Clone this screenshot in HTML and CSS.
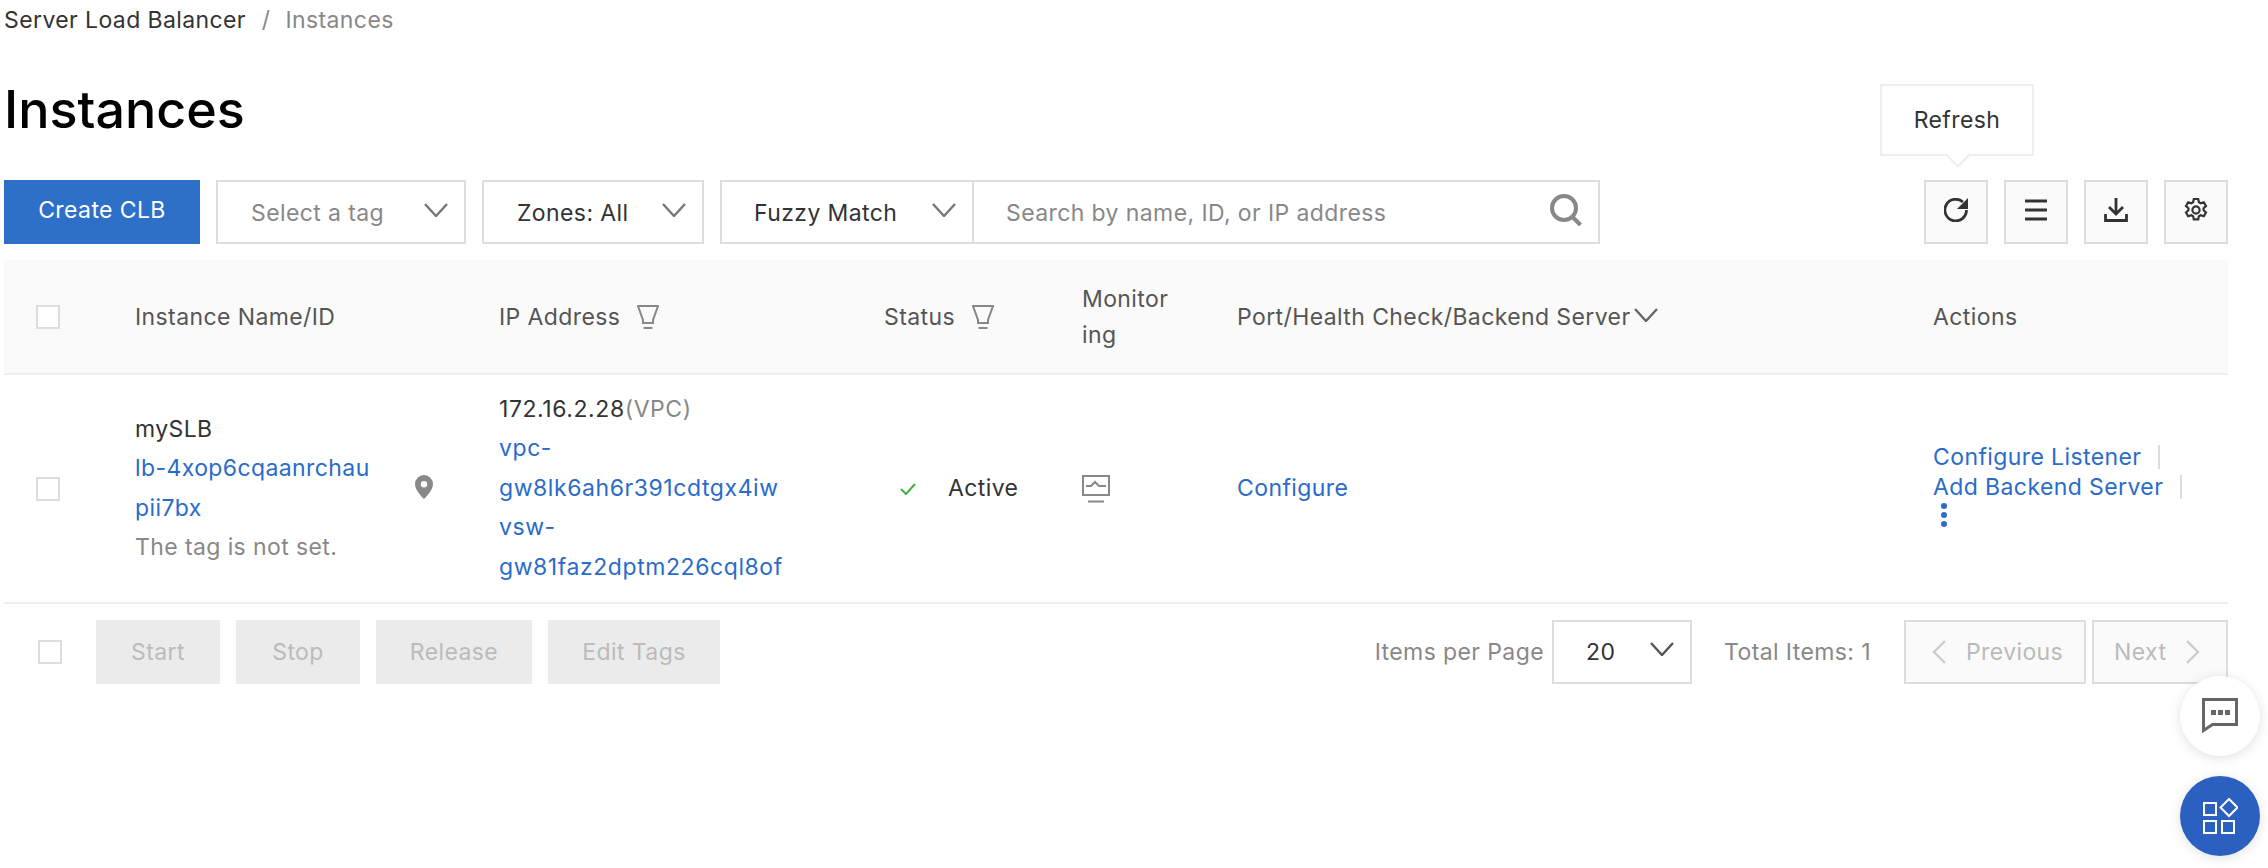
FILE: index.html
```html
<!DOCTYPE html>
<html lang="en">
<head>
    <meta charset="UTF-8">
    <title>Instances</title>
    <link rel="stylesheet" href="styles.css">
</head>
<body>
    <div class="page">
        <div class="crumbs">
            <span>Server Load Balancer</span>
            <span class="crumb-sep">/</span>
            <span class="crumb-now">Instances</span>
        </div>
        <h1 class="title">Instances</h1>

        <div class="toolbar">
            <button class="btn-primary">Create CLB</button>
            <div class="select select-tag">
                <span class="placeholder">Select a tag</span>
                <svg class="chev" viewBox="0 0 24 14"><path d="M1 1l11 12L23 1"/></svg>
            </div>
            <div class="select select-zone">
                <span>Zones: All</span>
                <svg class="chev" viewBox="0 0 24 14"><path d="M1 1l11 12L23 1"/></svg>
            </div>
            <div class="search-group">
                <div class="select select-match">
                    <span>Fuzzy Match</span>
                    <svg class="chev" viewBox="0 0 24 14"><path d="M1 1l11 12L23 1"/></svg>
                </div>
                <div class="search">
                    <span class="placeholder">Search by name, ID, or IP address</span>
                    <svg class="search-icon" viewBox="0 0 32 32"><circle cx="14" cy="14" r="12"/><path d="M22.500 23l8 8"/></svg>
                </div>
            </div>
            <div class="tools">
                <div class="tool tool-refresh">
                    <div class="tooltip">Refresh</div>
                    <svg class="tool-icon" viewBox="0 0 24 24"><path d="M22.500 12a10.800 10.800 0 1 1-3.600-8" fill="none"/><path class="solid" d="M24 0v11H13z"/></svg>
                </div>
                <div class="tool">
                    <svg class="tool-icon" viewBox="0 0 24 24"><path d="M1 3h22M1 12h22M1 21h22"/></svg>
                </div>
                <div class="tool">
                    <svg class="tool-icon" viewBox="0 0 24 24"><path d="M12 0v15M5 9l7 7 7-7M1.500 16v6.500h21V16"/></svg>
                </div>
                <div class="tool">
                    <svg class="tool-icon gear" viewBox="0 0 24 24"><path d="M9.800 1h4.400l.7 3.200 1.800 1 3.100-1 2.200 3.800-2.400 2.200v2l2.400 2.200-2.200 3.800-3.100-1-1.800 1-.7 3.200H9.800l-.7-3.200-1.800-1-3.100 1-2.200-3.800 2.400-2.200v-2L2 8l2.200-3.800 3.100 1 1.800-1z"/><circle cx="12" cy="12" r="3.600"/></svg>
                </div>
            </div>
        </div>

        <table class="list">
            <colgroup>
                <col class="col-check">
                <col class="col-name">
                <col class="col-ip">
                <col class="col-status">
                <col class="col-mon">
                <col class="col-port">
                <col class="col-actions">
            </colgroup>
            <thead>
                <tr>
                    <th><span class="check"></span></th>
                    <th>Instance Name/ID</th>
                    <th>IP Address <svg class="filter" viewBox="0 0 22 24"><path d="M1 1h20l-5 14v3H6v-3z"/><path d="M6.500 23h9"/></svg></th>
                    <th>Status <svg class="filter" viewBox="0 0 22 24"><path d="M1 1h20l-5 14v3H6v-3z"/><path d="M6.500 23h9"/></svg></th>
                    <th class="th-mon">Monitoring</th>
                    <th>Port/Health Check/Backend Server<svg class="sort" viewBox="0 0 24 14"><path d="M1 1l11 12L23 1"/></svg></th>
                    <th>Actions</th>
                </tr>
            </thead>
            <tbody>
                <tr>
                    <td><span class="check"></span></td>
                    <td>
                        <div class="name-cell">
                            <div class="name-text">
                                <div>mySLB</div>
                                <a href="#" class="break">lb-4xop6cqaanrchaupii7bx</a>
                                <div class="muted">The tag is not set.</div>
                            </div>
                            <svg class="pin" viewBox="0 0 18 24"><path fill-rule="evenodd" d="M9 0a9 9 0 0 1 9 9c0 5-5 11-9 15C5 20 0 14 0 9a9 9 0 0 1 9-9zm0 6a3.200 3.200 0 1 0 0 6.400A3.200 3.200 0 0 0 9 6z"/></svg>
                        </div>
                    </td>
                    <td class="ip-cell">
                        <div>172.16.2.28<span class="muted">(VPC)</span></div>
                        <a href="#">vpc-gw8lk6ah6r391cdtgx4iw</a><br>
                        <a href="#">vsw-gw81faz2dptm226cql8of</a>
                    </td>
                    <td>
                        <div class="status">
                            <svg class="ok" viewBox="0 0 16 12"><path d="M1 6l5 5 9-10"/></svg>
                            Active
                        </div>
                    </td>
                    <td>
                        <svg class="monitor" viewBox="0 0 28 28"><path d="M1 1h26v19H1z"/><path d="M4 11h5l4-4 4 4h7M6 26.500h16"/></svg>
                    </td>
                    <td><a href="#">Configure</a></td>
                    <td class="actions">
                        <div class="action-line"><a href="#">Configure Listener</a><span class="bar"></span></div>
                        <div class="action-line"><a href="#">Add Backend Server</a><span class="bar"></span></div>
                        <div class="dots"><i></i><i></i><i></i></div>
                    </td>
                </tr>
            </tbody>
        </table>

        <div class="footer">
            <span class="check foot-check"></span>
            <div class="bulk">
                <button class="btn-off btn-short">Start</button>
                <button class="btn-off btn-short">Stop</button>
                <button class="btn-off btn-release">Release</button>
                <button class="btn-off btn-tags">Edit Tags</button>
            </div>
            <div class="pager">
                <span class="muted">Items per Page</span>
                <div class="select select-size">
                    <span>20</span>
                    <svg class="chev chev-dark" viewBox="0 0 24 14"><path d="M1 1l11 12L23 1"/></svg>
                </div>
                <span class="muted total">Total Items: 1</span>
                <button class="page-btn page-prev">
                    <svg class="page-arrow" viewBox="0 0 14 24"><path d="M13 1L2 12l11 11"/></svg>
                    Previous
                </button>
                <button class="page-btn page-next">
                    Next
                    <svg class="page-arrow" viewBox="0 0 14 24"><path d="M1 1l11 11L1 23"/></svg>
                </button>
            </div>
        </div>
    </div>

    <div class="float float-chat">
        <svg viewBox="0 0 36 36"><path class="chat-line" d="M1.500 1.500h33v25h-24l-9 6z"/><path class="chat-dots" d="M9 12h5v5H9zM16 12h5v5h-5zM23 12h5v5h-5z"/></svg>
    </div>
    <div class="float float-apps">
        <svg viewBox="0 0 36 36"><path d="M2 5h12v12H2zM2 23h12v12H2zM20 23h12v12H20zM27 1l8.500 8.500L27 18l-8.500-8.500z"/></svg>
    </div>
</body>
</html>
```

FILE: styles.css
```css
* {
    box-sizing: border-box;
}
html, body {
    margin: 0;
    padding: 0;
    background: #fff;
}
body {
    font-family: Inter, "Noto Sans", sans-serif;
    font-size: 23px;
    letter-spacing: 0.4px;
    color: #333;
    height: 868px;
    overflow: hidden;
    position: relative;
}
a {
    color: #2b6bc9;
    text-decoration: none;
}
button {
    font: inherit;
    letter-spacing: inherit;
}
.muted {
    color: #888;
}
.page {
    width: 2228px;
    padding-left: 4px;
}

/* header */
.crumbs {
    height: 40px;
    line-height: 40px;
    color: #333;
}
.crumb-sep {
    color: #888;
    margin: 0 8px 0 9px;
}
.crumb-now {
    color: #888;
}
.title {
    margin: 35px 0 0;
    height: 105px;
    font-size: 52px;
    line-height: 70px;
    font-weight: 500;
    letter-spacing: 0;
    color: #000;
}

/* toolbar */
.toolbar {
    display: flex;
    height: 64px;
}
.btn-primary {
    width: 196px;
    height: 64px;
    border: 0;
    background: #2e6fc8;
    color: #fff;
    padding: 0 0 4px;
}
.select {
    display: flex;
    align-items: center;
    justify-content: space-between;
    height: 64px;
    border: 2px solid #ddd;
    background: #fff;
    padding: 2px 16px 0 33px;
}
.select-tag {
    width: 250px;
    margin-left: 16px;
}
.select-zone {
    width: 222px;
    margin-left: 16px;
}
.select-match {
    width: 252px;
    border-right: 0;
    padding-left: 32px;
}
.chev {
    width: 24px;
    height: 14px;
    margin-bottom: 6px;
    fill: none;
    stroke: #777;
    stroke-width: 2.400;
}
.placeholder {
    color: #888;
}
.search-group {
    display: flex;
    margin-left: 16px;
}
.search {
    width: 628px;
    height: 64px;
    border: 2px solid #ddd;
    display: flex;
    align-items: center;
    justify-content: space-between;
    padding: 2px 16px 0 32px;
}
.search-icon {
    width: 32px;
    height: 32px;
    margin-bottom: 6px;
    fill: none;
    stroke: #888;
    stroke-width: 4;
}
.tools {
    margin-left: auto;
    display: flex;
    gap: 16px;
}
.tool {
    width: 64px;
    height: 64px;
    border: 2px solid #ddd;
    background: #fafafa;
    display: flex;
    align-items: center;
    justify-content: center;
    padding-bottom: 4px;
}
.tool-refresh {
    position: relative;
}
.tool-icon {
    width: 24px;
    height: 24px;
    fill: none;
    stroke: #333;
    stroke-width: 2.800;
}
.tool-icon .solid {
    fill: #333;
    stroke: none;
}
.tool-icon.gear {
    stroke-width: 2.200;
}
.tooltip {
    position: absolute;
    left: -46px;
    bottom: 86px;
    width: 154px;
    height: 72px;
    border: 2px solid #eee;
    background: #fff;
    text-align: center;
    line-height: 68px;
}
.tooltip::after {
    content: "";
    position: absolute;
    left: 67px;
    bottom: -10px;
    width: 16px;
    height: 16px;
    background: #fff;
    border-right: 2px solid #eee;
    border-bottom: 2px solid #eee;
    transform: rotate(45deg);
}

/* table */
.list {
    width: 2224px;
    margin-top: 16px;
    border-collapse: collapse;
    table-layout: fixed;
}
.col-check { width: 115px; }
.col-name { width: 364px; }
.col-ip { width: 385px; }
.col-status { width: 198px; }
.col-mon { width: 155px; }
.col-port { width: 696px; }
.col-actions { width: 311px; }
.list th {
    height: 114px;
    background: #fafafa;
    font-weight: 400;
    color: #555;
    text-align: left;
    padding: 0 16px;
    border-bottom: 2px solid #eee;
    line-height: 36px;
}
.list td {
    height: 229px;
    padding: 0 16px;
    border-bottom: 2px solid #eee;
    line-height: 39.500px;
    vertical-align: middle;
}
.list th:first-child,
.list td:first-child {
    padding-left: 32px;
}
.list th.th-mon {
    word-break: break-all;
    padding-right: 48px;
}
.list td.ip-cell {
    padding-right: 64px;
    letter-spacing: 0.57px;
}
.check {
    display: block;
    width: 24px;
    height: 24px;
    border: 2px solid #ddd;
    background: #fff;
}
.filter {
    width: 22px;
    height: 24px;
    margin-left: 10px;
    vertical-align: -4px;
    fill: none;
    stroke: #888;
    stroke-width: 2;
}
.sort {
    width: 24px;
    height: 14px;
    margin-left: 4px;
    vertical-align: 3px;
    fill: none;
    stroke: #666;
    stroke-width: 2.400;
}
.name-cell {
    display: flex;
    align-items: center;
}
.name-text {
    width: 245px;
    flex: none;
}
.break {
    word-break: break-all;
}
.pin {
    width: 18px;
    height: 24px;
    margin-left: 35px;
    margin-bottom: 4px;
    fill: #888;
}
.status {
    display: flex;
    align-items: center;
    margin-left: 16px;
}
.ok {
    width: 16px;
    height: 12px;
    margin-right: 32px;
    fill: none;
    stroke: #3fb33f;
    stroke-width: 2;
}
.monitor {
    width: 28px;
    height: 28px;
    display: block;
    fill: none;
    stroke: #888;
    stroke-width: 2;
}
.list td.actions {
    line-height: 30px;
    padding-bottom: 8px;
}
.action-line {
    display: flex;
    align-items: center;
}
.bar {
    width: 2px;
    height: 24px;
    background: #ddd;
    margin-left: 17px;
}
.dots {
    display: flex;
    flex-direction: column;
    gap: 3px;
    width: 6px;
    margin: 1px 0 0 8px;
}
.dots i {
    display: block;
    width: 6px;
    height: 6px;
    border-radius: 50%;
    background: #2b6bc9;
}

/* footer */
.footer {
    display: flex;
    align-items: center;
    margin-top: 16px;
    height: 64px;
}
.foot-check {
    margin-left: 34px;
}
.bulk {
    display: flex;
    gap: 16px;
    margin-left: 34px;
}
.btn-off {
    height: 64px;
    border: 0;
    background: #ebebeb;
    color: #bbb;
    padding: 0;
}
.btn-short {
    width: 124px;
}
.btn-release {
    width: 156px;
}
.btn-tags {
    width: 172px;
}
.pager {
    margin-left: auto;
    display: flex;
    align-items: center;
}
.select-size {
    width: 140px;
    margin-left: 8px;
    padding: 0 16px 0 32px;
}
.chev-dark {
    stroke: #555;
}
.total {
    margin-left: 32px;
}
.page-btn {
    height: 64px;
    border: 2px solid #ddd;
    background: #fafafa;
    color: #bbb;
    display: flex;
    align-items: center;
}
.page-prev {
    width: 182px;
    margin-left: 33px;
    padding: 0 0 0 26px;
    gap: 20px;
}
.page-next {
    width: 136px;
    margin-left: 6px;
    padding: 0 0 0 20px;
    gap: 20px;
}
.page-arrow {
    width: 14px;
    height: 24px;
    fill: none;
    stroke: #ccc;
    stroke-width: 2.400;
}

/* floating buttons */
.float {
    position: absolute;
    left: 2180px;
    width: 80px;
    height: 80px;
    border-radius: 50%;
    display: flex;
    align-items: center;
    justify-content: center;
    box-shadow: 0 2px 12px rgba(0, 0, 0, 0.12);
}
.float svg {
    width: 36px;
    height: 36px;
}
.float-chat {
    top: 676px;
    background: #fff;
}
.chat-line {
    fill: none;
    stroke: #666;
    stroke-width: 3;
}
.chat-dots {
    fill: #666;
}
.float-apps {
    top: 776px;
    background: #2b60c0;
}
.float-apps path {
    fill: none;
    stroke: #fff;
    stroke-width: 2;
}
```
